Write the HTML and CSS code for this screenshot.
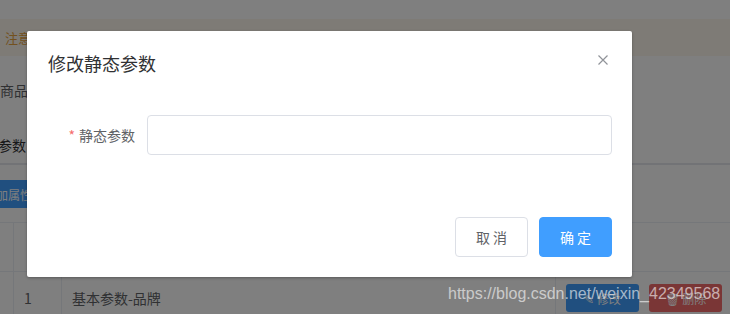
FILE: index.html
```html
<!DOCTYPE html>
<html lang="zh-CN">
<head>
    <meta charset="UTF-8">
    <meta name="viewport" content="width=device-width, initial-scale=1.0">
    <title>分类参数</title>
    <link rel="stylesheet" href="styles.css">
</head>
<body>
    <div class="page">
        <div class="page-top"></div>
        <div class="alert">注意：只允许为第三级分类设置相关参数！</div>
        <div class="cat-row">商品分类：</div>
        <div class="tabs">
            <span class="tab">静态参数</span>
        </div>
        <div class="toolbar">
            <button class="btn-add">添加属性</button>
        </div>
        <div class="table">
            <div class="cell c1"></div>
            <div class="cell c2"></div>
            <div class="cell c3"></div>
            <div class="cell c4"></div>
            <div class="cell c1 row"></div>
            <div class="cell c2 row">1</div>
            <div class="cell c3 row">基本参数-品牌</div>
            <div class="cell c4 row">
                <button class="btn-mini btn-edit">✎ 修改</button>
                <button class="btn-mini btn-del">🗑 删除</button>
            </div>
        </div>

        <div class="mask"></div>

        <div class="dialog">
            <div class="dialog-header">
                <span class="dialog-title">修改静态参数</span>
                <button class="dialog-close" aria-label="关闭">
                    <svg width="12" height="12" viewBox="0 0 12 12">
                        <path d="M1.5 1.5 L10.5 10.5 M10.5 1.5 L1.5 10.5" stroke="#909399" stroke-width="1.2" fill="none"/>
                    </svg>
                </button>
            </div>
            <div class="dialog-body">
                <div class="form-item">
                    <label class="form-label"><span class="req">*</span>静态参数</label>
                    <input class="form-input" type="text">
                </div>
            </div>
            <div class="dialog-footer">
                <button class="btn btn-default">取 消</button>
                <button class="btn btn-primary">确 定</button>
            </div>
        </div>

        <div class="watermark">https://blog.csdn.net/weixin_42349568</div>
    </div>
</body>
</html>
```

FILE: styles.css
```css
body {
    margin: 0;
    font-family: "Noto Sans CJK SC", "Liberation Sans", sans-serif;
    background-color: #fff;
}

.page {
    position: relative;
    width: 730px;
    height: 314px;
    overflow: hidden;
    background-color: #fff;
}

.page-top {
    height: 19px;
}

.alert {
    height: 37px;
    line-height: 37px;
    padding-left: 5px;
    font-size: 13px;
    color: #e6a23c;
    background-color: #fdf6ec;
}

.cat-row {
    margin-top: 24px;
    height: 20px;
    line-height: 20px;
    font-size: 14px;
    color: #606266;
    white-space: nowrap;
}

.tabs {
    margin-top: 25px;
    height: 38px;
    line-height: 38px;
    border-bottom: 2px solid #e4e7ed;
    white-space: nowrap;
}

.tab {
    margin-left: -30px;
    font-size: 14px;
    color: #303133;
}

.toolbar {
    margin-top: 15px;
    height: 28px;
}

.btn-add {
    margin-left: -31px;
    height: 28px;
    padding: 0 15px;
    border: none;
    border-radius: 3px;
    font-family: inherit;
    font-size: 12px;
    color: #fff;
    background-color: #409eff;
}

.table {
    margin-top: 14px;
    display: grid;
    grid-template-columns: 14px 48px 494px 1fr;
    border-top: 1px solid #ebeef5;
}

.cell {
    box-sizing: border-box;
    height: 49px;
    border-bottom: 1px solid #ebeef5;
    border-right: 1px solid #ebeef5;
    padding: 0 10px;
    font-size: 14px;
    color: #606266;
    display: flex;
    align-items: center;
    white-space: nowrap;
}

.cell.c4 {
    border-right: none;
}

.cell.c1 {
    padding: 0;
}

.cell.row {
    height: 52px;
    padding-top: 0;
    align-items: flex-start;
    line-height: 52px;
}

.cell.c4.row {
    padding-top: 12px;
    gap: 10px;
}

.btn-mini {
    width: 73px;
    height: 28px;
    border: none;
    border-radius: 3px;
    font-family: inherit;
    font-size: 12px;
    color: #fff;
}

.btn-edit {
    background-color: #409eff;
}

.btn-del {
    background-color: #f56c6c;
}

.mask {
    position: absolute;
    top: 0;
    left: 0;
    right: 0;
    bottom: 0;
    background-color: rgba(0, 0, 0, 0.5);
}

.dialog {
    position: absolute;
    left: 27px;
    top: 31px;
    width: 605px;
    background-color: #fff;
    border-radius: 2px;
    box-shadow: 0 1px 3px rgba(0, 0, 0, 0.3);
}

.dialog-header {
    position: relative;
    padding: 20px 20px 10px 21px;
}

.dialog-title {
    display: block;
    font-size: 18px;
    line-height: 24px;
    color: #303133;
}

.dialog-close {
    position: absolute;
    top: 21px;
    right: 21px;
    width: 16px;
    height: 16px;
    padding: 2px;
    border: none;
    background: none;
}

.dialog-body {
    padding: 30px 20px;
}

.form-item {
    display: flex;
    align-items: center;
    margin-bottom: 22px;
}

.form-label {
    width: 100px;
    box-sizing: border-box;
    padding-right: 12px;
    text-align: right;
    font-size: 14px;
    color: #606266;
}

.req {
    color: #f56c6c;
    margin-right: 4px;
}

.form-input {
    flex-grow: 1;
    box-sizing: border-box;
    height: 40px;
    border: 1px solid #dcdfe6;
    border-radius: 4px;
    padding: 0 15px;
    font-size: 14px;
    outline: none;
}

.dialog-footer {
    display: flex;
    justify-content: flex-end;
    gap: 11px;
    padding: 10px 20px 20px;
}

.btn {
    width: 73px;
    height: 40px;
    border-radius: 4px;
    font-family: inherit;
    font-size: 14px;
    cursor: pointer;
}

.btn-default {
    border: 1px solid #dcdfe6;
    background-color: #fff;
    color: #606266;
}

.btn-primary {
    border: 1px solid #409eff;
    background-color: #409eff;
    color: #fff;
}

.watermark {
    position: absolute;
    left: 448px;
    top: 285px;
    font-family: "Liberation Sans", Arial, sans-serif;
    font-size: 16px;
    line-height: 18px;
    color: rgba(255, 255, 255, 0.6);
    white-space: nowrap;
}
```
